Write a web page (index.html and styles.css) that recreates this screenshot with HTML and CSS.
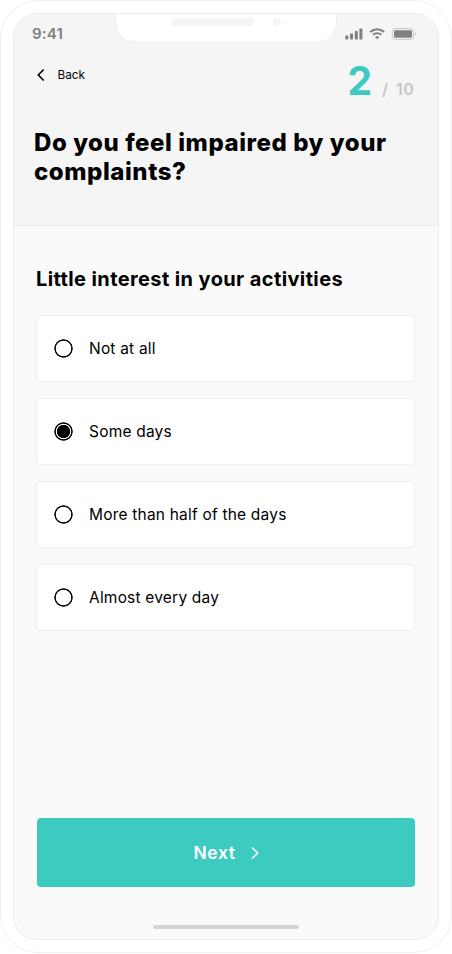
FILE: index.html
```html
<!DOCTYPE html>
<html lang="en">
<head>
	<meta charset="utf-8">
	<title>Questionnaire</title>
	<link rel="stylesheet" href="styles.css">
</head>
<body>
	<div class="phone">
		<div class="screen">
			<svg class="notch" width="222" height="30" viewBox="0 0 222 30">
				<path d="M0 0H222V0.500H221.500V8C221.500 21 213 29 202 29H20C9 29 0.500 21 0.500 8V0.500H0Z" fill="#fff"/>
				<path d="M0.500 1V8C0.500 21 9 29 20 29H202C213 29 221.500 21 221.500 8V1" fill="none" stroke="#eee"/>
				<rect x="56" y="5" width="83" height="8" rx="4" fill="#f5f5f5"/>
				<circle cx="162" cy="9" r="4.200" fill="#f5f5f5"/>
			</svg>

			<header class="header">
				<div class="status">
					<span class="time">9:41</span>
					<svg class="status-icons" width="72" height="14" viewBox="0 0 72 14">
						<g fill="#808080">
							<rect x="0.300" y="8.500" width="3" height="4" rx="0.800"/>
							<rect x="5" y="6.500" width="3" height="6" rx="0.800"/>
							<rect x="9.800" y="4" width="3" height="8.500" rx="0.800"/>
							<rect x="14.400" y="1.500" width="3" height="11" rx="0.800"/>
							<rect x="49" y="3.300" width="18" height="7.400" rx="1.300"/>
						</g>
						<g fill="none" stroke="#808080" stroke-width="2">
							<path d="M25.200 4.900C29.200 1.200 35.200 1.200 39.200 4.900"/>
							<path d="M27.900 7.800C30.300 5.600 34.100 5.600 36.500 7.800"/>
						</g>
						<path d="M29.900 10C31.100 8.900 33.300 8.900 34.500 10L32.200 12.300Z" fill="#808080"/>
						<rect x="47.300" y="1.600" width="21.400" height="10.800" rx="3" fill="none" stroke="#c6c6c6"/>
						<path d="M70 5.200C71.300 5.900 71.300 8.100 70 8.800Z" fill="#c6c6c6"/>
					</svg>
				</div>
				<div class="nav">
					<a class="back">
						<svg width="8" height="12" viewBox="0 0 8 12">
							<path d="M6.700 0.500L1.300 6L6.700 11.500" fill="none" stroke="#000" stroke-width="1.600"/>
						</svg>
						<span>Back</span>
					</a>
					<div class="progress">
						<span class="current">2</span>
						<span class="slash">/</span>
						<span class="total">10</span>
					</div>
				</div>
				<h1>Do you feel impaired by your complaints?</h1>
			</header>

			<main class="content">
				<h2>Little interest in your activities</h2>
				<form class="options">
					<label class="option"><input type="radio" name="interest">Not at all</label>
					<label class="option"><input type="radio" name="interest" checked>Some days</label>
					<label class="option"><input type="radio" name="interest">More than half of the days</label>
					<label class="option"><input type="radio" name="interest">Almost every day</label>
				</form>
				<button class="next" type="button">
					<span>Next</span>
					<svg width="8" height="12" viewBox="0 0 8 12">
						<path d="M1 0.500L6.700 6L1 11.500" fill="none" stroke="#fff" stroke-width="1.600"/>
					</svg>
				</button>
				<div class="home-bar"></div>
			</main>
		</div>
	</div>
</body>
</html>
```

FILE: styles.css
```css
* {
	box-sizing: border-box;
}

body {
	margin: 0;
	background-color: #fff;
	color: #000;
	font-family: Inter, sans-serif;
}

.phone {
	width: 452px;
	height: 953px;
	padding: 12px;
	border: 1px solid #eee;
	border-radius: 38px;
	background-color: #fff;
}

.screen {
	position: relative;
	display: flex;
	flex-direction: column;
	width: 426px;
	height: 927px;
	border: 1px solid #ececec;
	border-radius: 24px;
	background-color: #fafafa;
	overflow: hidden;
}

/* lies over the header */
.notch {
	position: absolute;
	top: -1px;
	left: 101px;
}

.header {
	height: 212px;
	padding: 0 20px;
	border-bottom: 1px solid #eee;
	background-color: #f5f5f5;
}

.status {
	display: flex;
	justify-content: space-between;
	height: 40px;
	padding: 10px 1px 0 18px;
	margin-left: -20px;
}

.time {
	color: #808080;
	font-size: 15px;
	font-weight: 600;
	line-height: 20px;
	letter-spacing: 0.2px;
}

.status-icons {
	margin-top: 3px;
}

.nav {
	display: flex;
	justify-content: space-between;
	height: 60px;
}

.back {
	display: flex;
	align-items: center;
	gap: 13px;
	height: 20px;
	margin: 11px 0 0 2.5px;
	font-size: 11.8px;
}

.progress {
	display: flex;
	align-items: baseline;
	padding: 2px 4px 0 0;
	color: #c6c6c6;
	font-size: 16px;
	font-weight: 600;
	line-height: 50px;
}

.current {
	color: #3dcbc1;
	font-size: 39px;
	font-weight: 700;
}

.slash {
	margin: 0 8px 0 10px;
}

.total {
	letter-spacing: 0.3px;
}

h1 {
	margin: 14px 0 0;
	font-size: 24px;
	font-weight: 800;
	line-height: 29px;
	letter-spacing: 0.56px;
}

.content {
	flex: 1;
	display: flex;
	flex-direction: column;
	padding: 39px 23px 10px 22px;
}

h2 {
	margin: 0 0 22px;
	font-size: 20px;
	font-weight: 700;
	line-height: 28px;
	letter-spacing: 0.39px;
}

.options {
	display: flex;
	flex-direction: column;
	gap: 16px;
}

.option {
	display: flex;
	align-items: center;
	gap: 16px;
	height: 67px;
	padding-left: 17px;
	border: 1px solid #eee;
	border-radius: 4px;
	background-color: #fff;
	font-size: 15.5px;
	letter-spacing: 0.2px;
}

.option input {
	appearance: none;
	width: 19px;
	height: 19px;
	margin: 0;
	background: radial-gradient(circle, transparent 7.4px, #000 8.1px, #000 8.8px, transparent 9.5px);
}

.option input:checked {
	background: radial-gradient(circle, #000 6.3px, #fff 7px, #fff 7.4px, #000 8.1px, #000 8.8px, transparent 9.5px);
}

.next {
	display: flex;
	align-items: center;
	justify-content: center;
	gap: 15px;
	height: 69px;
	margin: auto 0 0 1px;
	border: none;
	border-radius: 4px;
	background-color: #3dcbc1;
	color: #fff;
	font-family: inherit;
	font-size: 17.5px;
	font-weight: 600;
	letter-spacing: 0.6px;
}

.home-bar {
	width: 146px;
	height: 4px;
	margin: 38px auto 0;
	border-radius: 2px;
	background-color: #d3d3d3;
}
```
